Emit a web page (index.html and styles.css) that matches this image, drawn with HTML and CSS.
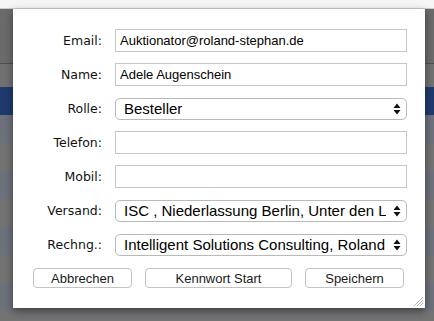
FILE: index.html
```html
<!DOCTYPE html>
<html lang="de">
<head>
  <meta charset="UTF-8">
  <meta name="viewport" content="width=device-width, initial-scale=1.0">
  <title>Benutzer bearbeiten</title>
  <link rel="stylesheet" href="styles.css">
</head>
<body>
  <div class="app">
    <div class="topStrip"></div>
    <div class="header"></div>
    <div class="toolbar"></div>
    <div class="selectedRow"></div>
    <div class="row alt"></div>
    <div class="row"></div>
    <div class="row alt"></div>
    <div class="row"></div>
    <div class="row alt"></div>
    <div class="row"></div>
    <div class="row alt"></div>
  </div>

  <div class="dialog">
    <form class="userForm">
      <label class="fieldLabel" for="email">Email:</label>
      <input class="textField" id="email" type="text" value="Auktionator@roland-stephan.de">

      <label class="fieldLabel" for="name">Name:</label>
      <input class="textField" id="name" type="text" value="Adele Augenschein">

      <label class="fieldLabel" for="rolle">Rolle:</label>
      <div class="selectBox">
        <select id="rolle">
          <option>Besteller</option>
        </select>
        <svg class="arrows" width="8" height="12" viewBox="0 0 8 12"><path d="M4 0.5 L7.5 5 L0.5 5 Z M4 11.5 L7.5 7 L0.5 7 Z" fill="#111"/></svg>
      </div>

      <label class="fieldLabel" for="telefon">Telefon:</label>
      <input class="textField" id="telefon" type="text">

      <label class="fieldLabel" for="mobil">Mobil:</label>
      <input class="textField" id="mobil" type="text">

      <label class="fieldLabel" for="versand">Versand:</label>
      <div class="selectBox">
        <select id="versand">
          <option>ISC , Niederlassung Berlin, Unter den Linden</option>
        </select>
        <svg class="arrows" width="8" height="12" viewBox="0 0 8 12"><path d="M4 0.5 L7.5 5 L0.5 5 Z M4 11.5 L7.5 7 L0.5 7 Z" fill="#111"/></svg>
      </div>

      <label class="fieldLabel" for="rechnung">Rechng.:</label>
      <div class="selectBox">
        <select id="rechnung">
          <option>Intelligent Solutions Consulting, Roland Stephan</option>
        </select>
        <svg class="arrows" width="8" height="12" viewBox="0 0 8 12"><path d="M4 0.5 L7.5 5 L0.5 5 Z M4 11.5 L7.5 7 L0.5 7 Z" fill="#111"/></svg>
      </div>
    </form>

    <div class="buttonRow">
      <button type="button" class="small">Abbrechen</button>
      <button type="button" class="wide">Kennwort Start</button>
      <button type="button" class="small">Speichern</button>
    </div>

    <svg class="grip" width="10" height="10" viewBox="0 0 10 10">
      <path d="M10 1 L1 10 M10 4 L4 10 M10 7 L7 10" stroke="#b0b0b0" stroke-width="1"/>
    </svg>
  </div>
</body>
</html>
```

FILE: styles.css
```css
body {
  margin: 0;
  height: 321px;
  overflow: hidden;
  background-color: #737373;
  position: relative;
}

.app {
  display: flex;
  flex-direction: column;
}

.topStrip {
  height: 8px;
  background-color: #f6f6f6;
  border-bottom: 1px solid #c4ccd4;
}

.header {
  height: 54px;
  background-color: #6b6b6b;
  border-bottom: 1px solid #4e4e4e;
}

.toolbar {
  height: 23px;
  background-color: #717171;
}

.selectedRow {
  height: 28px;
  background-color: #1f3b6e;
}

.row {
  height: 28px;
  background-color: #737373;
}

.row.alt {
  background-color: #6d717c;
}

.dialog {
  position: absolute;
  left: 13px;
  top: 9px;
  width: 412px;
  height: 299px;
  background-color: #fff;
  box-shadow: 0 3px 8px rgba(0, 0, 0, 0.45);
  box-sizing: border-box;
  padding-top: 20px;
}

.userForm {
  display: grid;
  grid-template-columns: 89px 292px;
  column-gap: 13px;
  row-gap: 11px;
  grid-auto-rows: 23px;
  align-items: center;
}

.fieldLabel {
  text-align: right;
  font-family: "DejaVu Sans", sans-serif;
  font-size: 12.5px;
  color: #111;
}

.textField {
  height: 23px;
  box-sizing: border-box;
  border: 1px solid #c6c6c6;
  border-radius: 0;
  padding: 0 4px;
  margin: 0;
  font-family: "Liberation Sans", sans-serif;
  font-size: 13px;
  color: #000;
  outline: none;
}

.selectBox {
  position: relative;
  height: 22px;
}

.selectBox select {
  appearance: none;
  -webkit-appearance: none;
  width: 100%;
  height: 22px;
  box-sizing: border-box;
  border: 1px solid #b9b9b9;
  border-radius: 5px;
  background-color: #fff;
  padding: 0 20px 0 8px;
  margin: 0;
  font-family: "Liberation Sans", sans-serif;
  font-size: 15px;
  color: #000;
  outline: none;
}

.arrows {
  position: absolute;
  right: 6px;
  top: 5px;
  pointer-events: none;
}

.buttonRow {
  display: flex;
  gap: 13px;
  margin-top: 12px;
  padding-left: 20px;
}

button {
  height: 20px;
  box-sizing: border-box;
  border: 1px solid #c3c3c3;
  border-radius: 4px;
  background-color: #fff;
  font-family: "Liberation Sans", sans-serif;
  font-size: 13px;
  color: #1a1a1a;
  padding: 0;
}

.small {
  width: 99px;
}

.wide {
  width: 147px;
}

.grip {
  position: absolute;
  right: 2px;
  bottom: 2px;
}
```
